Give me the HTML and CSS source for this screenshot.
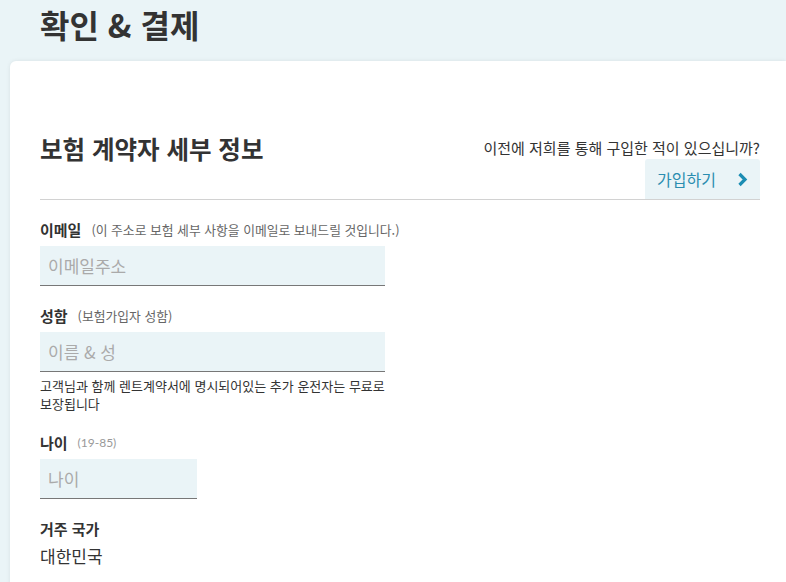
FILE: index.html
```html
<!DOCTYPE html>
<html lang="ko">
<head>
<meta charset="utf-8">
<title>확인 &amp; 결제</title>
<link rel="stylesheet" href="styles.css">
</head>
<body>
<header class="page-head">
  <h1 class="page-title">확인 &amp; 결제</h1>
</header>
<main class="card">
  <div class="section-head">
    <h2 class="section-title">보험 계약자 세부 정보</h2>
    <div class="login-box">
      <p class="login-q">이전에 저희를 통해 구입한 적이 있으십니까?</p>
      <button class="login-btn" type="button">
        <span>가입하기</span>
        <svg class="chev" width="11" height="15" viewBox="0 0 11 15" aria-hidden="true"><path d="M2.5 2 L8 7.5 L2.5 13" fill="none" stroke="#1b8db3" stroke-width="3.2" stroke-linejoin="miter"/></svg>
      </button>
    </div>
  </div>

  <div class="field">
    <div class="label-row"><span class="label">이메일</span><span class="hint">(이 주소로 보험 세부 사항을 이메일로 보내드릴 것입니다.)</span></div>
    <input class="input wide" type="text" placeholder="이메일주소">
  </div>

  <div class="field">
    <div class="label-row"><span class="label">성함</span><span class="hint">(보험가입자 성함)</span></div>
    <input class="input wide" type="text" placeholder="이름 &amp; 성">
    <p class="note">고객님과 함께 렌트계약서에 명시되어있는 추가 운전자는 무료로<br>보장됩니다</p>
  </div>

  <div class="field">
    <div class="label-row"><span class="label">나이</span><span class="hint range">(19-85)</span></div>
    <input class="input narrow" type="text" placeholder="나이">
  </div>

  <div class="field">
    <div class="label-row"><span class="label">거주 국가</span></div>
    <div class="value">대한민국</div>
  </div>
</main>
</body>
</html>
```
FILE: styles.css
```css
* { box-sizing: border-box; }
html, body { margin: 0; padding: 0; }
body {
  background: #eaf4f7;
  font-family: "Noto Sans CJK KR", "Noto Sans", sans-serif;
  color: #333;
  overflow: hidden;
}
.page-head {
  height: 61px;
  padding-left: 40px;
}
.page-title {
  margin: 0;
  font-size: 32px;
  line-height: 49px;
  font-weight: 700;
  color: #333;
}
.card {
  margin-left: 10px;
  background: #fff;
  border-radius: 6px 0 0 0;
  box-shadow: 0 0 4px rgba(0, 0, 0, 0.08);
  padding: 76px 26px 60px 30px;
  min-height: 600px;
}
.section-head {
  display: flex;
  justify-content: space-between;
  align-items: flex-start;
  border-bottom: 1px solid #d2d2d2;
}
.section-title {
  margin: 0;
  font-size: 24.5px;
  line-height: 24px;
  font-weight: 700;
  color: #333;
}
.login-box {
  display: flex;
  flex-direction: column;
  align-items: flex-end;
}
.login-q {
  margin: 0;
  font-size: 15px;
  line-height: 22px;
  color: #333;
}
.login-btn {
  display: flex;
  align-items: center;
  gap: 21px;
  height: 40px;
  padding: 0 12px;
  border: 0;
  border-radius: 3px 3px 0 0;
  background: #eaf4f7;
  font-family: inherit;
  font-size: 16px;
  color: #2b8db0;
}
.chev { display: block; }
.field { margin-top: 20px; }
.label-row {
  display: flex;
  align-items: center;
  gap: 10px;
  height: 20px;
  margin-bottom: 6px;
}
.label {
  font-size: 15px;
  line-height: 20px;
  font-weight: 700;
  color: #333;
}
.hint {
  font-size: 12.8px;
  line-height: 20px;
  color: #666;
}
.range {
  font-family: Lato, "Noto Sans", sans-serif;
  font-size: 12px;
  color: #999;
}
.input {
  display: block;
  height: 40px;
  padding: 0 8px;
  border: 0;
  border-bottom: 1px solid #777;
  background: #eaf4f7;
  font-family: inherit;
  font-size: 17px;
  color: #333;
  outline: none;
}
.input::placeholder { color: #aaa; }
.wide { width: 345px; }
.narrow { width: 157px; }
.note {
  margin: 5px 0 0;
  font-size: 13px;
  line-height: 18px;
  color: #333;
}
.value {
  font-size: 17px;
  line-height: 22px;
  margin-top: 1px;
}
```
